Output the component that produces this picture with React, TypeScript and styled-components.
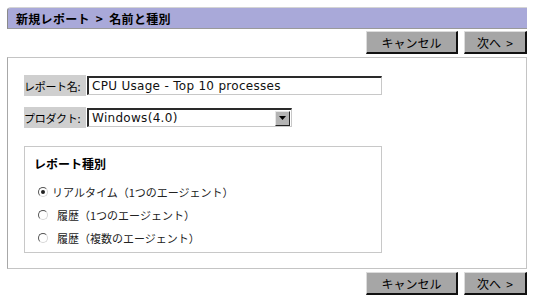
import React from "react";
import styled, { createGlobalStyle } from "styled-components";

const GlobalStyle = createGlobalStyle`
  body {
    margin: 0;
    background: #ffffff;
    font-family: "Noto Sans CJK JP", "DejaVu Sans", sans-serif;
    color: #000;
  }
`;

const Page = styled.div`
  width: 520px;
  padding: 7px 7px 0 7px;
`;

const Header = styled.div`
  height: 20px;
  display: flex;
  align-items: center;
  padding-left: 8px;
  background: #a9a9d9;
  border-top: 1px solid #d4d4d4;
  border-left: 1px solid #8a8a8a;
  border-bottom: 1px solid #9a9a9a;
  border-top-left-radius: 4px;
  font-size: 12px;
  font-weight: bold;
  letter-spacing: 0.3px;
  white-space: pre;
`;

const ButtonRow = styled.div<{ $top: number }>`
  display: flex;
  justify-content: flex-end;
  gap: 6px;
  margin-top: ${(p) => p.$top}px;
`;

const Button = styled.button<{ $w: number }>`
  box-sizing: border-box;
  width: ${(p) => p.$w}px;
  height: 23px;
  padding: 0;
  background: #a6a6a6;
  border-top: 1px solid #dcdcdc;
  border-left: 1px solid #dcdcdc;
  border-right: 2px solid #111;
  border-bottom: 2px solid #111;
  font-family: "Noto Sans CJK JP", sans-serif;
  font-size: 12px;
  color: #000;
  white-space: pre;
`;

const Panel = styled.div`
  box-sizing: border-box;
  height: 212px;
  margin-top: 3px;
  padding: 17px 16px 0 16px;
  border: 1px solid #c4c4c4;
  border-left-color: #a8a8a8;
`;

const FieldRow = styled.div<{ $top: number }>`
  display: flex;
  align-items: center;
  margin-top: ${(p) => p.$top}px;
`;

const Label = styled.div`
  box-sizing: border-box;
  width: 62px;
  height: 21px;
  display: flex;
  align-items: center;
  background: #cfcfcf;
  font-size: 11px;
  white-space: nowrap;
  letter-spacing: -0.3px;
`;

const TextBox = styled.div<{ $w: number }>`
  box-sizing: border-box;
  width: ${(p) => p.$w}px;
  height: 19px;
  margin-left: 1px;
  display: flex;
  align-items: center;
  padding-left: 3px;
  background: #fff;
  border-top: 2px solid #2a2a2a;
  border-left: 2px solid #2a2a2a;
  border-right: 1px solid #c8c8c8;
  border-bottom: 1px solid #c8c8c8;
  font-family: "DejaVu Sans", sans-serif;
  font-size: 12px;
  letter-spacing: 0.3px;
  color: #111;
`;

const SelectText = styled.span`
  flex: 1;
`;

const ArrowBox = styled.span`
  box-sizing: border-box;
  width: 15px;
  height: 15px;
  margin-right: 1px;
  display: flex;
  align-items: center;
  justify-content: center;
  background: #b4b4b4;
  border-top: 1px solid #e6e6e6;
  border-left: 1px solid #e6e6e6;
  border-right: 1px solid #222;
  border-bottom: 1px solid #222;
`;

const TypeBox = styled.div`
  box-sizing: border-box;
  width: 358px;
  height: 107px;
  margin-top: 18px;
  padding: 9px 9px 0 9px;
  border: 1px solid #c8c8c8;
`;

const TypeTitle = styled.div`
  font-size: 12px;
  font-weight: bold;
  height: 16px;
  line-height: 16px;
  margin-bottom: 8px;
`;

const RadioRow = styled.div`
  display: flex;
  align-items: center;
  height: 23px;
  padding-left: 4px;
  font-size: 11px;
`;

const RadioDot = styled.span<{ $on?: boolean }>`
  box-sizing: border-box;
  position: relative;
  width: 10px;
  height: 10px;
  border-radius: 50%;
  border: 1px solid;
  border-color: #555 #d6d6d6 #d6d6d6 #555;
  background: #fff;
  &::after {
    content: "";
    display: ${(p) => (p.$on ? "block" : "none")};
    position: absolute;
    left: 2px;
    top: 2px;
    width: 4px;
    height: 4px;
    border-radius: 50%;
    background: #222;
  }
`;

const RadioText = styled.span<{ $gap: number }>`
  margin-left: ${(p) => p.$gap}px;
  color: #222;
`;

const options = [
  { text: "リアルタイム（1つのエージェント）", on: true, gap: 4 },
  { text: "履歴（1つのエージェント）", on: false, gap: 9 },
  { text: "履歴（複数のエージェント）", on: false, gap: 9 },
];

export default function App() {
  return (
    <>
      <GlobalStyle />
      <Page>
        <Header>新規レポート  &gt;  名前と種別</Header>
        <ButtonRow $top={2}>
          <Button $w={92}>キャンセル</Button>
          <Button $w={63}>次へ  &gt;</Button>
        </ButtonRow>
        <Panel>
          <FieldRow $top={0}>
            <Label>レポート名:</Label>
            <TextBox $w={295}>CPU Usage - Top 10 processes</TextBox>
          </FieldRow>
          <FieldRow $top={11}>
            <Label>プロダクト:</Label>
            <TextBox $w={205}>
              <SelectText>Windows(4.0)</SelectText>
              <ArrowBox>
                <svg width="7" height="4" viewBox="0 0 7 4">
                  <path d="M0 0h7L3.5 4z" fill="#000" />
                </svg>
              </ArrowBox>
            </TextBox>
          </FieldRow>
          <TypeBox>
            <TypeTitle>レポート種別</TypeTitle>
            {options.map((o) => (
              <RadioRow key={o.text}>
                <RadioDot $on={o.on} />
                <RadioText $gap={o.gap}>{o.text}</RadioText>
              </RadioRow>
            ))}
          </TypeBox>
        </Panel>
        <ButtonRow $top={3}>
          <Button $w={92}>キャンセル</Button>
          <Button $w={63}>次へ  &gt;</Button>
        </ButtonRow>
      </Page>
    </>
  );
}
